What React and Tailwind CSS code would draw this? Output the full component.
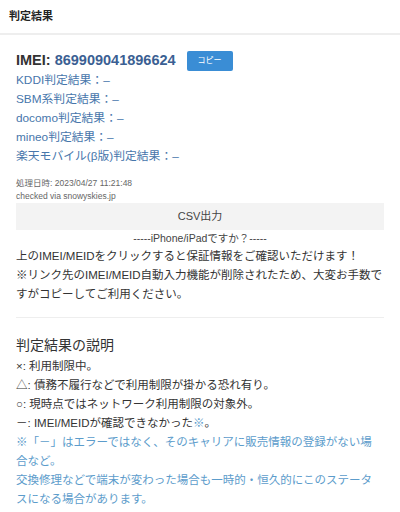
export default function App() {
  const font = { fontFamily: '"Liberation Sans", "Noto Sans CJK JP", sans-serif' };
  return (
    <div className="w-[400px] h-[512px] bg-white overflow-hidden text-[#333]" style={font}>
      <div className="h-[35px] border-b-2 border-[#eeeeee] px-[9px] flex items-center">
        <span className="text-[11px] font-bold text-[#222]">判定結果</span>
      </div>
      <div className="px-[16px]">
        <div className="mt-[16px] flex items-center h-[20px]">
          <span className="text-[14.5px] font-bold text-[#333]">IMEI: </span>
          <span className="text-[14.5px] font-bold text-[#3b5f93] ml-[4px]">869909041896624</span>
          <span className="ml-[11px] bg-[#3a8dd5] text-white text-[8px] rounded-[2px] w-[46px] h-[20px] flex items-center justify-center">コピー</span>
        </div>
        <div className="text-[11.8px] leading-[19px] text-[#4776ab]">
          <div>KDDI判定結果：–</div>
          <div>SBM系判定結果：–</div>
          <div>docomo判定結果：–</div>
          <div>mineo判定結果：–</div>
          <div>楽天モバイル(β版)判定結果：–</div>
        </div>
        <div className="mt-[11px] text-[8.5px] leading-[13px] text-[#666]">
          <div>処理日時: 2023/04/27 11:21:48</div>
          <div>checked via snowyskies.jp</div>
        </div>
        <div className="h-[27px] bg-[#f3f3f3] flex items-center justify-center text-[11px] text-[#444]">CSV出力</div>
        <div className="text-center text-[10.5px] leading-[17px] text-[#444]">-----iPhone/iPadですか？-----</div>
        <div className="text-[11.5px] leading-[19px] text-[#333] whitespace-nowrap">
          上のIMEI/MEIDをクリックすると保証情報をご確認いただけます！<br />
          ※リンク先のIMEI/MEID自動入力機能が削除されたため、大変お手数で<br />
          すがコピーしてご利用ください。
        </div>
        <div className="mt-[13px] border-t border-[#eeeeee]"></div>
        <div className="mt-[15px] text-[14px] leading-[24px] text-[#333]">判定結果の説明</div>
        <div className="text-[11.5px] leading-[19px] whitespace-nowrap">
          <div className="text-[#333]">×: 利用制限中。</div>
          <div className="text-[#333]">△: 債務不履行などで利用制限が掛かる恐れ有り。</div>
          <div className="text-[#333]">○: 現時点ではネットワーク利用制限の対象外。</div>
          <div className="text-[#333]">－: IMEI/MEIDが確認できなかった<span className="text-[#5c9ccb]">※</span>。</div>
          <div className="text-[#5c9ccb]">※「－」はエラーではなく、そのキャリアに販売情報の登録がない場<br />合など。</div>
          <div className="text-[#5c9ccb]">交換修理などで端末が変わった場合も一時的・恒久的にこのステータ<br />スになる場合があります。</div>
        </div>
      </div>
    </div>
  );
}
